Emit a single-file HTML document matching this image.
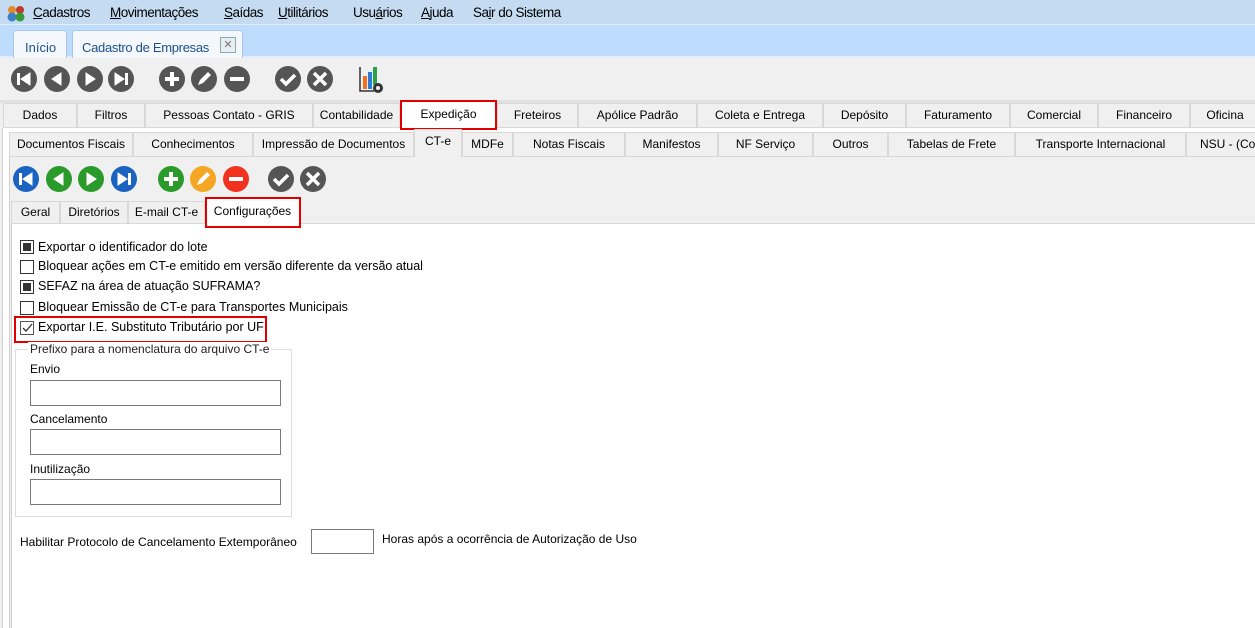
<!DOCTYPE html><html><head><meta charset="utf-8"><style>
*{box-sizing:border-box;margin:0;padding:0}
body{width:1255px;height:628px;overflow:hidden;background:#fff;font-family:"Liberation Sans",Arial,sans-serif;font-size:12px;color:#000;position:relative}
.a{position:absolute}
.menu{left:0;top:0;width:1255px;height:25px;background:#c5dbf1;border-bottom:1px solid #e6eef8}
.menu span{position:absolute;top:5px;font-size:13.5px;letter-spacing:-0.5px}
.strip{left:0;top:25px;width:1255px;height:33px;background:#bedcfd;border-bottom:2px solid #e4edf7}
.tb{left:0;top:58px;width:1255px;height:42px;background:#f0f0f0}
.row{height:25px;background:#f0f0f0;border:1px solid #d8d8d8;text-align:center;line-height:23px;font-size:12px}
.cb{position:absolute;left:20px;width:14px;height:14px;border:1px solid #333;background:#fff}
.cb.f::after{content:"";position:absolute;left:2px;top:2px;width:8px;height:8px;background:#333}
.lbl{position:absolute;left:38px;font-size:12.5px}
.in{position:absolute;left:30px;width:251px;height:26px;border:1px solid #7a7a7a;background:#fff}
.red{position:absolute;border:2px solid #e00000}
</style></head><body>
<div class="a menu">
<svg class="a" style="left:6px;top:4px" width="20" height="18"><circle cx="6" cy="6" r="4" fill="#e08a2a"/><circle cx="14" cy="6" r="4" fill="#c0392b"/><circle cx="6" cy="13" r="4.5" fill="#3b82c4"/><circle cx="14" cy="13" r="4.5" fill="#3a9a3a"/></svg>
<span style="left:33px"><u>C</u>adastros</span><span style="left:110px"><u>M</u>ovimentações</span><span style="left:224px"><u>S</u>aídas</span><span style="left:278px"><u>U</u>tilitários</span><span style="left:353px">Usu<u>á</u>rios</span><span style="left:421px"><u>A</u>juda</span><span style="left:473px">Sa<u>i</u>r do Sistema</span>
</div>
<div class="a strip">
<div class="a" style="left:13px;top:5px;width:54px;height:28px;background:#f4f8fd;border:1px solid #a9c6e6;border-bottom:none;border-radius:3px 3px 0 0;color:#1c4f8c;font-size:13px;padding:9px 0 0 11px">Início</div>
<div class="a" style="left:72px;top:5px;width:171px;height:28px;background:#f4f8fd;border:1px solid #a9c6e6;border-bottom:none;border-radius:3px 3px 0 0;color:#1c4f8c;font-size:13px;padding:9px 0 0 9px;letter-spacing:-0.3px">Cadastro de Empresas</div>
<div class="a" style="left:220px;top:12px;width:16px;height:16px;border:1px solid #8aa;background:#e8eef4;font-size:11px;line-height:14px;text-align:center;color:#777">✕</div>
</div>
<div class="a tb"></div>
<svg class="a" style="left:0;top:58px" width="400" height="42">
<g fill="#555"><circle cx="24" cy="21" r="13"/><circle cx="57" cy="21" r="13"/><circle cx="90" cy="21" r="13"/><circle cx="121" cy="21" r="13"/><circle cx="172" cy="21" r="13"/><circle cx="204" cy="21" r="13"/><circle cx="237" cy="21" r="13"/><circle cx="288" cy="21" r="13"/><circle cx="320" cy="21" r="13"/></g>
<g fill="#fff" stroke="#fff"><rect x="17" y="15" width="3" height="12" stroke="none"/><path d="M30 15v12l-9-6z"/><path d="M61 15v12l-9-6z"/><path d="M86 15v12l9-6z"/><path d="M115 15v12l9-6z"/><rect x="125" y="15" width="3" height="12" stroke="none"/>
<path d="M172 14v14M165 21h14" stroke-width="4"/><path d="M198 27l2-5 8-8 3 3-8 8z" stroke="none"/><path d="M230 21h14" stroke-width="4"/><path d="M281 21l5 5 9-9" fill="none" stroke-width="3.5"/><path d="M314 15l12 12M326 15l-12 12" stroke-width="3.5"/></g>
<path d="M360 9v24h14" stroke="#333" stroke-width="1.5" fill="none"/><rect x="363" y="18" width="4" height="13" fill="#f07020"/><rect x="368" y="14" width="4" height="17" fill="#2b7bd6"/><rect x="373" y="9" width="4" height="18" fill="#2ea04a"/><circle cx="378" cy="30" r="5" fill="#333"/><circle cx="378" cy="30" r="2" fill="#f0f0f0"/>
</svg>
<div class="a" style="left:0;top:100px;width:1255px;height:3px;background:#e0e0e0"></div>
<div class="a" style="left:0;top:103px;width:1255px;height:525px;background:#f0f0f0"></div>
<div class="a" style="left:2px;top:128px;width:1253px;height:500px;background:#fff;border-left:1px solid #d0d0d0"></div>
<div class="a" style="left:9px;top:155px;width:1246px;height:473px;background:#f0f0f0;border-left:1px solid #d0d0d0"></div>
<div class="a" style="left:11px;top:223px;width:1244px;height:405px;background:#fff;border-left:1px solid #d0d0d0;border-top:1px solid #d8d8d8"></div>
<div class="a row" style="left:3px;top:103px;width:74px">Dados</div>
<div class="a row" style="left:77px;top:103px;width:68px">Filtros</div>
<div class="a row" style="left:145px;top:103px;width:168px">Pessoas Contato - GRIS</div>
<div class="a row" style="left:313px;top:103px;width:87px">Contabilidade</div>
<div class="a row" style="left:400px;top:100px;width:97px;height:29px;background:#fff;line-height:27px">Expedição</div>
<div class="a row" style="left:497px;top:103px;width:81px">Freteiros</div>
<div class="a row" style="left:578px;top:103px;width:119px">Apólice Padrão</div>
<div class="a row" style="left:697px;top:103px;width:126px">Coleta e Entrega</div>
<div class="a row" style="left:823px;top:103px;width:83px">Depósito</div>
<div class="a row" style="left:906px;top:103px;width:104px">Faturamento</div>
<div class="a row" style="left:1010px;top:103px;width:88px">Comercial</div>
<div class="a row" style="left:1098px;top:103px;width:92px">Financeiro</div>
<div class="a row" style="left:1190px;top:103px;width:70px">Oficina</div>
<div class="red" style="left:400px;top:100px;width:97px;height:30px"></div>
<div class="a row" style="left:9px;top:132px;width:124px">Documentos Fiscais</div>
<div class="a row" style="left:133px;top:132px;width:120px">Conhecimentos</div>
<div class="a row" style="left:253px;top:132px;width:161px">Impressão de Documentos</div>
<div class="a row" style="left:414px;top:129px;width:48px;height:28px;background:#f0f0f0;border-bottom:none">CT-e</div>
<div class="a row" style="left:462px;top:132px;width:51px">MDFe</div>
<div class="a row" style="left:513px;top:132px;width:112px">Notas Fiscais</div>
<div class="a row" style="left:625px;top:132px;width:93px">Manifestos</div>
<div class="a row" style="left:718px;top:132px;width:95px">NF Serviço</div>
<div class="a row" style="left:813px;top:132px;width:75px">Outros</div>
<div class="a row" style="left:888px;top:132px;width:127px">Tabelas de Frete</div>
<div class="a row" style="left:1015px;top:132px;width:171px">Transporte Internacional</div>
<div class="a row" style="left:1186px;top:132px;width:80px;text-align:left;padding-left:13px">NSU - (Co</div>
<svg class="a" style="left:9px;top:165px" width="330" height="30">
<circle cx="17" cy="14" r="13" fill="#1a63c0"/><circle cx="50" cy="14" r="13" fill="#2a9a2a"/><circle cx="82" cy="14" r="13" fill="#2a9a2a"/><circle cx="115" cy="14" r="13" fill="#1a63c0"/>
<circle cx="162" cy="14" r="13" fill="#2a9a2a"/><circle cx="194" cy="14" r="13" fill="#f5a623"/><circle cx="227" cy="14" r="13" fill="#f0321e"/><circle cx="272" cy="14" r="13" fill="#555"/><circle cx="304" cy="14" r="13" fill="#555"/>
<g fill="#fff" stroke="#fff"><rect x="10" y="8" width="3" height="12" stroke="none"/><path d="M23 8v12l-9-6z"/><path d="M54 8v12l-9-6z"/><path d="M78 8v12l9-6z"/><path d="M109 8v12l9-6z"/><rect x="119" y="8" width="3" height="12" stroke="none"/>
<path d="M162 7v14M155 14h14" stroke-width="4"/><path d="M188 20l2-5 8-8 3 3-8 8z" stroke="none"/><path d="M220 14h14" stroke-width="4"/><path d="M265 14l5 5 9-9" fill="none" stroke-width="3.5"/><path d="M298 8l12 12M310 8l-12 12" stroke-width="3.5"/></g>
</svg>
<div class="a row" style="left:11px;top:201px;width:49px;height:23px;line-height:21px">Geral</div>
<div class="a row" style="left:60px;top:201px;width:68px;height:23px;line-height:21px">Diretórios</div>
<div class="a row" style="left:128px;top:201px;width:77px;height:23px;line-height:21px">E-mail CT-e</div>
<div class="a row" style="left:205px;top:198px;width:95px;height:27px;background:#fff;border-bottom:none;line-height:24px">Configurações</div>
<div class="red" style="left:205px;top:197px;width:96px;height:31px"></div>
<div class="cb f" style="top:240px"></div><div class="lbl" style="top:240px">Exportar o identificador do lote</div>
<div class="cb" style="top:260px"></div><div class="lbl" style="top:259px">Bloquear ações em CT-e emitido em versão diferente da versão atual</div>
<div class="cb f" style="top:280px"></div><div class="lbl" style="top:279px">SEFAZ na área de atuação SUFRAMA?</div>
<div class="cb" style="top:301px"></div><div class="lbl" style="top:300px">Bloquear Emissão de CT-e para Transportes Municipais</div>
<div class="cb" style="top:321px;border-color:#555"><svg width="12" height="12" style="position:absolute;left:0;top:0"><path d="M2 6l3 3 6-7" stroke="#333" stroke-width="1.3" fill="none"/></svg></div><div class="lbl" style="top:320px">Exportar I.E. Substituto Tributário por UF</div>
<div class="red" style="left:14px;top:316px;width:253px;height:27px"></div>
<div class="a" style="left:15px;top:349px;width:277px;height:168px;border:1px solid #dcdcdc"></div>
<div class="a" style="left:28px;top:342px;background:#fff;padding:0 2px;font-size:12px;color:#222">Prefixo para a nomenclatura do arquivo CT-e</div>
<div class="a" style="left:30px;top:362px">Envio</div>
<div class="in" style="top:380px"></div>
<div class="a" style="left:30px;top:412px">Cancelamento</div>
<div class="in" style="top:429px"></div>
<div class="a" style="left:30px;top:462px">Inutilização</div>
<div class="in" style="top:479px"></div>
<div class="a" style="left:20px;top:535px">Habilitar Protocolo de Cancelamento Extemporâneo</div>
<div class="a" style="left:311px;top:529px;width:63px;height:25px;border:1px solid #7a7a7a;background:#fff"></div>
<div class="a" style="left:382px;top:532px">Horas após a ocorrência de Autorização de Uso</div>
</body></html>
